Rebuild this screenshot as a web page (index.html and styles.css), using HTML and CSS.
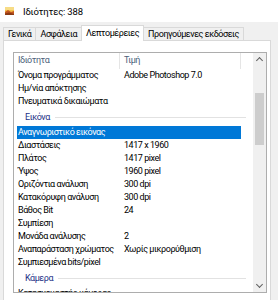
FILE: index.html
```html
<!DOCTYPE html>
<html lang="el">
<head>
<meta charset="UTF-8">
<meta name="viewport" content="width=device-width,initial-scale=1">
<title>Ιδιότητες: 388</title>
<link rel="stylesheet" href="styles.css">
</head>
<body>

<div class="titlebar">
  <svg class="app-icon" width="9" height="8" viewBox="0 0 9 8">
    <rect x="0" y="0" width="9" height="8" fill="#f4c04a"/>
    <rect x="0" y="0" width="9" height="3" fill="#f7dc86"/>
    <path d="M0 8 L0 5 L3 3 L6 5 L9 4 L9 8 Z" fill="#c4561f"/>
    <path d="M0 8 L0 6.5 L4 5.5 L9 7 L9 8 Z" fill="#8a3a14"/>
  </svg>
  <span>Ιδιότητες: 388</span>
</div>

<div class="dialog">
  <div class="tabs">
    <div class="tab">Γενικά</div>
    <div class="tab">Ασφάλεια</div>
    <div class="tab active">Λεπτομέρειες</div>
    <div class="tab">Προηγούμενες εκδόσεις</div>
  </div>

  <div class="page">
    <div class="list">
      <div class="list-body">
        <div class="head">
          <span class="c1">Ιδιότητα</span><span class="c2">Τιμή</span>
        </div>
        <div class="row"><span class="c1">Όνομα προγράμματος</span><span class="c2">Adobe Photoshop 7.0</span></div>
        <div class="row"><span class="c1">Ημ/νία απόκτησης</span><span class="c2"></span></div>
        <div class="row"><span class="c1">Πνευματικά δικαιώματα</span><span class="c2"></span></div>

        <div class="group"><span>Εικόνα</span></div>
        <div class="row sel"><span class="c1">Αναγνωριστικό εικόνας</span><span class="c2"></span></div>
        <div class="row"><span class="c1">Διαστάσεις</span><span class="c2">1417 x 1960</span></div>
        <div class="row"><span class="c1">Πλάτος</span><span class="c2">1417 pixel</span></div>
        <div class="row"><span class="c1">Ύψος</span><span class="c2">1960 pixel</span></div>
        <div class="row"><span class="c1">Οριζόντια ανάλυση</span><span class="c2">300 dpi</span></div>
        <div class="row"><span class="c1">Κατακόρυφη ανάλυση</span><span class="c2">300 dpi</span></div>
        <div class="row"><span class="c1">Βάθος Bit</span><span class="c2">24</span></div>
        <div class="row"><span class="c1">Συμπίεση</span><span class="c2"></span></div>
        <div class="row"><span class="c1">Μονάδα ανάλυσης</span><span class="c2">2</span></div>
        <div class="row"><span class="c1">Αναπαράσταση χρώματος</span><span class="c2">Χωρίς μικρορύθμιση</span></div>
        <div class="row"><span class="c1">Συμπιεσμένα bits/pixel</span><span class="c2"></span></div>

        <div class="group"><span>Κάμερα</span></div>
        <div class="row"><span class="c1">Κατασκευαστής κάμερας</span><span class="c2"></span></div>
      </div>

      <div class="scrollbar">
        <div class="arrow up"></div>
        <div class="track"><div class="thumb"></div></div>
        <div class="arrow down"></div>
      </div>
    </div>
  </div>
</div>

</body>
</html>
```

FILE: styles.css
```css
:root{
  --face:    #f0f0f0;
  --border:  #d9d9d9;
  --list-bd: #adadad;
  --select:  #0078d7;
  --group:   #1e3287;
}
*{box-sizing:border-box;margin:0;padding:0}
html,body{width:278px;height:300px;overflow:hidden}
body{
  font-family:Roboto,'Noto Sans',sans-serif;
  font-size:9px;
  letter-spacing:-.45px;
  color:#000;
  background:var(--face);
}

/* ---------- Titulo ---------- */
.titlebar{
  height:22px;
  background:#fff;
  display:flex;
  align-items:center;
  gap:9px;
  padding-left:5px;
  font-size:9.5px;
  letter-spacing:-.2px;
}
.app-icon{display:block}

/* ---------- Pestañas ---------- */
.dialog{padding:3px 7px 0 3px}
.tabs{
  display:flex;
  align-items:flex-end;
  height:15px;
  position:relative;
  z-index:1;
}
.tab{
  height:13px;
  line-height:12px;
  padding:0 4px;
  border:1px solid var(--border);
  border-bottom:none;
  margin-right:-1px;
  background:var(--face);
  white-space:nowrap;
}
.tab.active{
  height:16px;
  line-height:14px;
  background:#fff;
  margin-bottom:-1px;
}

/* ---------- Pagina ---------- */
.page{
  background:#fff;
  border:1px solid var(--border);
  height:270px;
  padding:11px 3px 0 9px;
}
.list{
  border:1px solid var(--list-bd);
  height:241px;
  display:flex;
  overflow:hidden;
}
.list-body{flex:1;overflow:hidden}

.head,.row{display:flex;margin-left:3px;width:224px}
.head{height:16px;line-height:15px;color:#4c607a}
.head .c1{border-right:1px solid #e5e5e5}
.head .c2{border-right:1px solid #e5e5e5}
.c1{width:103px;padding-left:1px;white-space:nowrap;overflow:hidden}
.c2{flex:1;padding-left:4px;white-space:nowrap;overflow:hidden}

.row{height:13px;line-height:13px}
.row.sel{background:var(--select);color:#fff}

.group{
  height:18px;
  display:flex;
  align-items:center;
  gap:5px;
  padding-left:11px;
  width:232px;
  color:var(--group);
}
.group::after{
  content:"";
  flex:1;
  height:1px;
  background:#e2e2e2;
}

/* ---------- Barra de desplazamiento ---------- */
.scrollbar{
  width:13px;
  background:var(--face);
  display:flex;
  flex-direction:column;
}
.arrow{height:13px;position:relative}
.arrow::before{
  content:"";
  position:absolute;
  left:4px;top:5px;
  width:4px;height:4px;
  border-left:1px solid #606060;
  border-top:1px solid #606060;
  transform:rotate(45deg);
}
.arrow.down::before{top:3px;transform:rotate(225deg)}
.track{flex:1;padding:27px 2px 0}
.thumb{height:52px;background:#cdcdcd}
```
